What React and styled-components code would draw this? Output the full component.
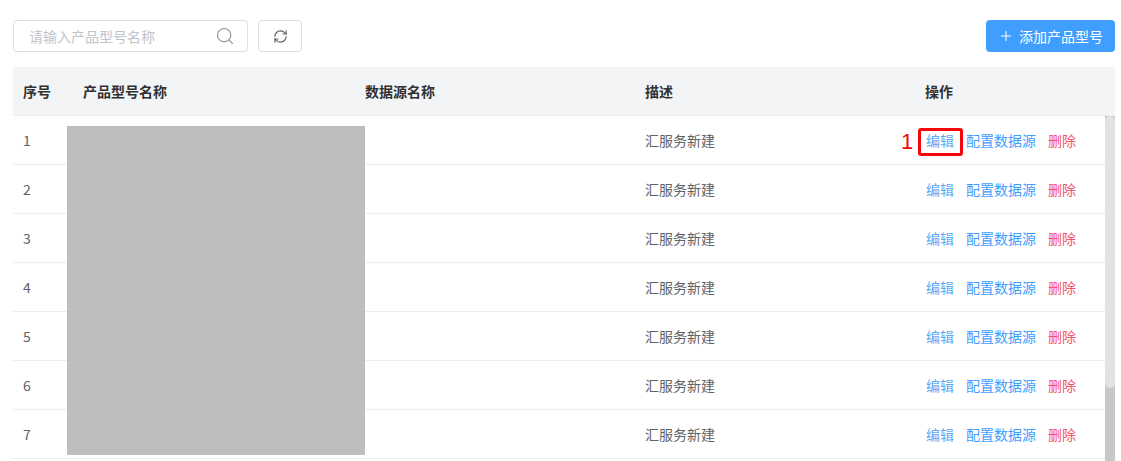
import React from 'react';
import styled, { createGlobalStyle } from 'styled-components';
import { Plus, Search, RefreshCw } from 'lucide-react';

const GlobalStyle = createGlobalStyle`
  html, body {
    margin: 0;
    padding: 0;
    background: #fff;
    overflow: hidden;
  }
  body {
    font-family: "Noto Sans CJK SC", "Liberation Sans", sans-serif;
    font-size: 14px;
    color: #606266;
  }
`;

const Page = styled.div`
  width: 1121px;
  height: 461px;
  padding: 20px 6px 0 13px;
  box-sizing: border-box;
  overflow: hidden;
`;

const Toolbar = styled.div`
  display: flex;
  align-items: center;
  height: 32px;
  margin-bottom: 15px;
`;

const SearchBox = styled.div`
  display: flex;
  align-items: center;
  justify-content: space-between;
  box-sizing: border-box;
  width: 235px;
  height: 32px;
  padding: 0 12px 1px 15px;
  border: 1px solid #dcdfe6;
  border-radius: 4px;
  color: #c0c4cc;
  svg {
    color: #8d949e;
  }
`;

const IconButton = styled.button`
  display: flex;
  align-items: center;
  justify-content: center;
  box-sizing: border-box;
  width: 44px;
  height: 32px;
  margin-left: 10px;
  padding: 0;
  background: #fff;
  border: 1px solid #dcdfe6;
  border-radius: 4px;
  color: #606266;
`;

const AddButton = styled.button`
  display: flex;
  align-items: center;
  justify-content: center;
  gap: 5px;
  box-sizing: border-box;
  width: 129px;
  height: 32px;
  margin-left: auto;
  padding: 0 0 1px;
  background: #409eff;
  border: 0;
  border-radius: 4px;
  color: #fff;
  font-family: inherit;
  font-size: 14px;
`;

const Table = styled.div`
  position: relative;
  width: 1102px;
`;

const Row = styled.div`
  display: grid;
  grid-template-columns: 70px 282px 280px 280px 1fr;
  align-items: center;
  box-sizing: border-box;
  height: 49px;
  padding-bottom: 1px;
  border-bottom: 1px solid #ebeef5;
`;

const HeadRow = styled(Row)`
  background: #f3f4f6;
  color: #303133;
  font-weight: 700;
`;

const Cell = styled.div`
  padding-left: ${p => p.$pad || 0}px;
  white-space: nowrap;
`;

const Actions = styled.div`
  display: flex;
  align-items: center;
  padding-left: 1px;
`;

const Link = styled.span`
  color: ${p => (p.$danger ? '#f4516c' : '#409eff')};
  margin-right: ${p => p.$gap || 0}px;
`;

const EditLink = styled(Link)`
  color: #5fa8f5;
`;

const Highlight = styled.div`
  position: absolute;
  left: 905px;
  top: 61px;
  width: 45px;
  height: 28px;
  box-sizing: border-box;
  border: 3px solid #f5060a;
  border-radius: 3px;
`;

const Marker = styled.div`
  position: absolute;
  left: 888px;
  top: 59px;
  color: #f5060a;
  font-family: "Liberation Sans", sans-serif;
  font-size: 22px;
  line-height: 32px;
`;

const Redaction = styled.div`
  position: absolute;
  left: 54px;
  top: 59px;
  width: 298px;
  height: 329px;
  background: #bebebe;
`;

const Scrollbar = styled.div`
  position: absolute;
  right: 0;
  top: 49px;
  width: 10px;
  height: 350px;
  background: #c8c8c8;
`;

const Thumb = styled.div`
  height: 272px;
  background: #e3e3e3;
  border-radius: 5px;
`;

const rows = [1, 2, 3, 4, 5, 6, 7];

export default function App() {
  return (
    <>
      <GlobalStyle />
      <Page>
        <Toolbar>
          <SearchBox>
            请输入产品型号名称
            <Search size={20} strokeWidth={1.4} />
          </SearchBox>
          <IconButton>
            <RefreshCw size={15} strokeWidth={1.8} />
          </IconButton>
          <AddButton>
            <Plus size={16} strokeWidth={1.5} />
            添加产品型号
          </AddButton>
        </Toolbar>
        <Table>
          <HeadRow>
            <Cell $pad={10}>序号</Cell>
            <Cell>产品型号名称</Cell>
            <Cell>数据源名称</Cell>
            <Cell>描述</Cell>
            <Cell>操作</Cell>
          </HeadRow>
          {rows.map(n => (
            <Row key={n}>
              <Cell $pad={10}>{n}</Cell>
              <Cell />
              <Cell />
              <Cell>汇服务新建</Cell>
              <Actions>
                <EditLink $gap={12}>编辑</EditLink>
                <Link $gap={12}>配置数据源</Link>
                <Link $danger>删除</Link>
              </Actions>
            </Row>
          ))}
          <Redaction />
          <Marker>1</Marker>
          <Highlight />
          <Scrollbar>
            <Thumb />
          </Scrollbar>
        </Table>
      </Page>
    </>
  );
}
